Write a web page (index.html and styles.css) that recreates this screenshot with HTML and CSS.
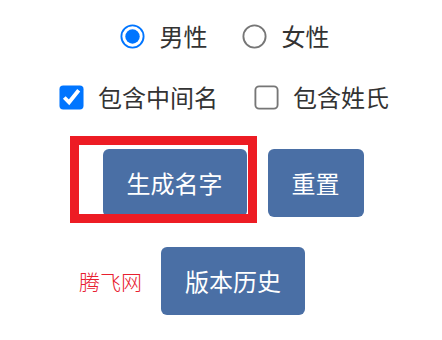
FILE: index.html
```html
<!DOCTYPE html>
<html lang="zh-CN">
<head>
    <meta charset="UTF-8">
    <meta name="viewport" content="width=device-width, initial-scale=1.0">
    <title>名字生成器</title>
    <link rel="stylesheet" href="styles.css">
</head>
<body>
    <div class="row gender">
        <label class="option"><input type="radio" name="gender" value="male" checked>男性</label>
        <label class="option"><input type="radio" name="gender" value="female">女性</label>
    </div>
    <div class="row extras">
        <label class="option"><input type="checkbox" id="middleName" checked>包含中间名</label>
        <label class="option"><input type="checkbox" id="surname">包含姓氏</label>
    </div>
    <div class="row actions">
        <div class="highlight-wrap">
            <button class="btn">生成名字</button>
            <!-- annotation box over the main button -->
            <span class="highlight"></span>
        </div>
        <button class="btn">重置</button>
    </div>
    <div class="row history">
        <span class="brand">腾飞网</span>
        <button class="btn">版本历史</button>
    </div>
</body>
</html>
```

FILE: styles.css
```css
/* Body and global styles */
body {
    margin: 0;
    padding-top: 18px;
    font-family: "Noto Sans CJK SC", "Noto Sans", sans-serif;
    color: #333;
    background-color: #fff;
}

.row {
    display: flex;
    justify-content: center;
    align-items: center;
}

.option {
    display: flex;
    align-items: center;
    font-size: 24px;
    line-height: 36px;
}

/* native controls scaled up to 24px */
.option input {
    width: 13px;
    height: 13px;
    margin: 0 20.5px 0 5.5px;
    transform: scale(1.85);
}

.gender {
    gap: 35px;
    padding-left: 8px;
}

.extras {
    gap: 36px;
    margin-top: 25px;
    padding-left: 6px;
}

/* Buttons */
.actions {
    gap: 21px;
    margin-top: 34px;
    padding-left: 24px;
}

.btn {
    font-family: inherit;
    font-size: 24px;
    line-height: 36px;
    padding: 16px 24px;
    border: none;
    border-radius: 6px;
    background-color: #4a6fa5;
    color: #fff;
    cursor: pointer;
}

.highlight-wrap {
    position: relative;
}

.highlight {
    position: absolute;
    left: -33px;
    top: -13px;
    width: 187px;
    height: 87px;
    box-sizing: border-box;
    border: 9px solid #ed1c24;
    pointer-events: none;
}

.history {
    gap: 19px;
    margin-top: 30px;
    padding-right: 58px;
}

.brand {
    font-size: 21px;
    font-weight: 300;
    color: #e8202f;
}
```
